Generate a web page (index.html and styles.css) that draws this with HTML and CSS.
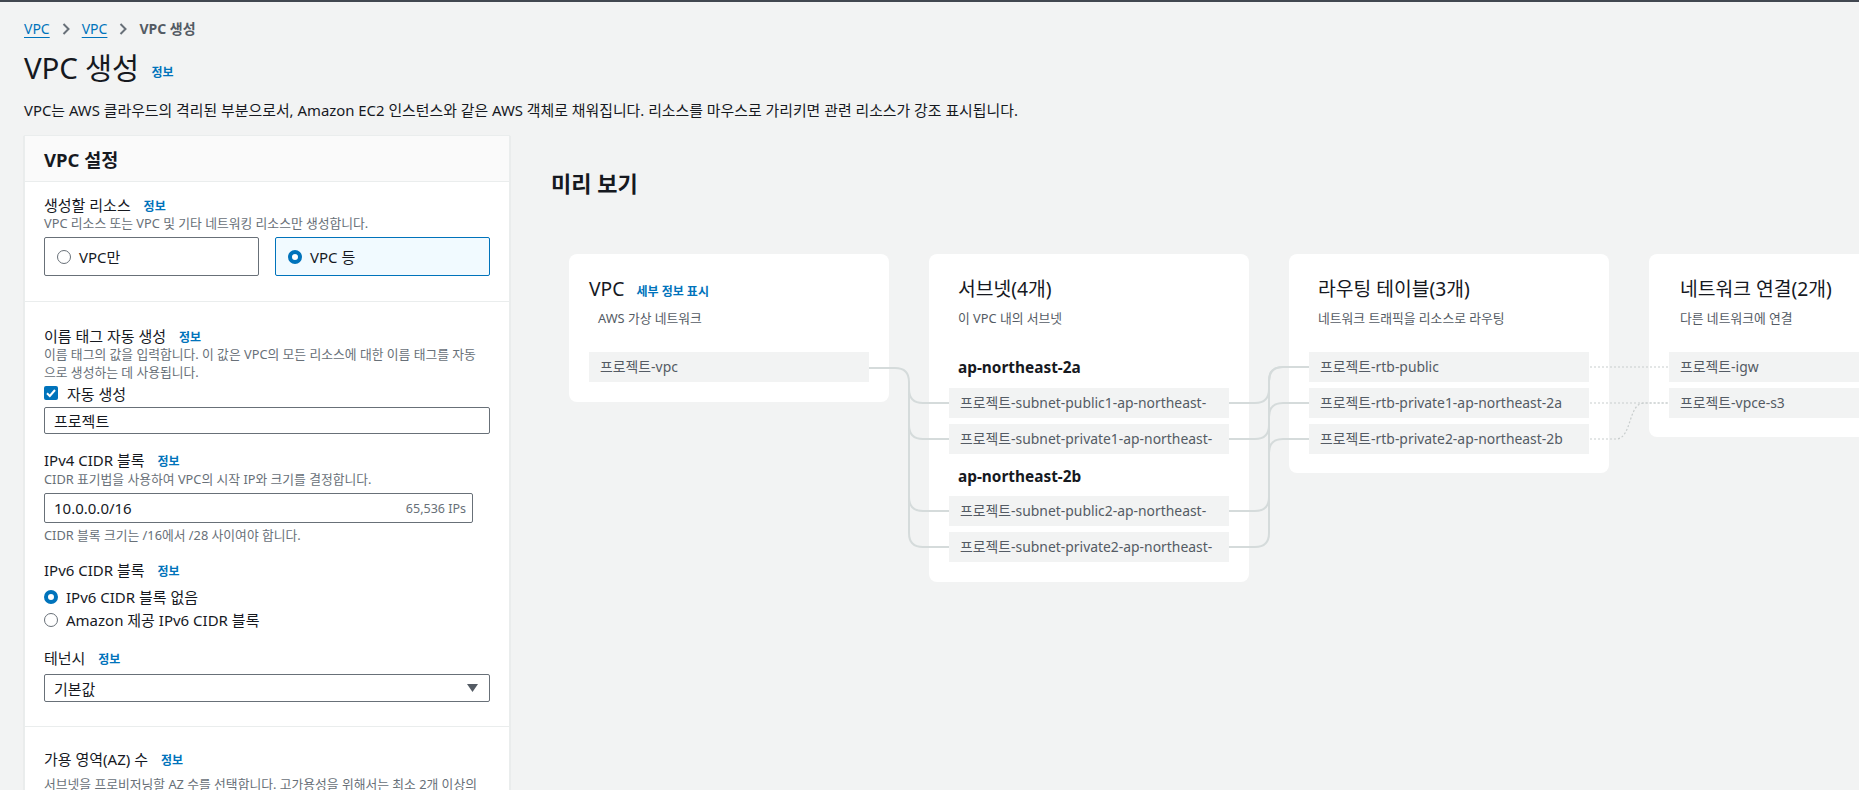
FILE: index.html
```html
<!DOCTYPE html>
<html lang="ko">
<head>
<meta charset="utf-8">
<title>VPC 생성</title>
<link rel="stylesheet" href="styles.css">
</head>
<body>
<div class="topbar"></div>
<div class="page">
  <nav class="crumbs">
    <a class="crumb-link">VPC</a>
    <svg class="chev" width="8" height="12" viewBox="0 0 8 12"><path d="M1.5 1 L6.5 6 L1.5 11" fill="none" stroke="#687078" stroke-width="2"/></svg>
    <a class="crumb-link">VPC</a>
    <svg class="chev" width="8" height="12" viewBox="0 0 8 12"><path d="M1.5 1 L6.5 6 L1.5 11" fill="none" stroke="#687078" stroke-width="2"/></svg>
    <span class="crumb-current">VPC 생성</span>
  </nav>
  <h1 class="title">VPC 생성 <span class="info">정보</span></h1>
  <p class="page-desc">VPC는 AWS 클라우드의 격리된 부분으로서, Amazon EC2 인스턴스와 같은 AWS 객체로 채워집니다. 리소스를 마우스로 가리키면 관련 리소스가 강조 표시됩니다.</p>

  <div class="layout">
    <aside class="panel">
      <div class="panel-head">VPC 설정</div>

      <div class="section s1">
        <div class="label">생성할 리소스 <span class="info">정보</span></div>
        <div class="hint">VPC 리소스 또는 VPC 및 기타 네트워킹 리소스만 생성합니다.</div>
        <div class="tiles">
          <div class="tile"><span class="radio"></span><span>VPC만</span></div>
          <div class="tile tile-on"><span class="radio radio-on"></span><span>VPC 등</span></div>
        </div>
      </div>

      <div class="section s2">
        <div class="label">이름 태그 자동 생성 <span class="info">정보</span></div>
        <div class="hint hint2">이름 태그의 값을 입력합니다. 이 값은 VPC의 모든 리소스에 대한 이름 태그를 자동<br>으로 생성하는 데 사용됩니다.</div>
        <div class="check-row">
          <span class="checkbox"><svg width="14" height="14" viewBox="0 0 14 14"><path d="M3 7.2 L5.8 10 L11 4" fill="none" stroke="#fff" stroke-width="2"/></svg></span>
          <span>자동 생성</span>
        </div>
        <div class="input input-name">프로젝트</div>

        <div class="label mt17">IPv4 CIDR 블록 <span class="info">정보</span></div>
        <div class="hint mt1">CIDR 표기법을 사용하여 VPC의 시작 IP와 크기를 결정합니다.</div>
        <div class="input input-cidr"><span>10.0.0.0/16</span><span class="ips">65,536 IPs</span></div>
        <div class="hint help">CIDR 블록 크기는 /16에서 /28 사이여야 합니다.</div>

        <div class="label mt17">IPv6 CIDR 블록 <span class="info">정보</span></div>
        <div class="radio-list">
          <div class="radio-row"><span class="radio radio-on"></span><span>IPv6 CIDR 블록 없음</span></div>
          <div class="radio-row"><span class="radio"></span><span>Amazon 제공 IPv6 CIDR 블록</span></div>
        </div>

        <div class="label mt18">테넌시 <span class="info">정보</span></div>
        <div class="input select"><span>기본값</span><svg width="11" height="8" viewBox="0 0 11 8"><path d="M0 0 H11 L5.5 8 Z" fill="#545b64"/></svg></div>
      </div>

      <div class="section s3">
        <div class="label">가용 영역(AZ) 수 <span class="info">정보</span></div>
        <div class="hint az-hint">서브넷을 프로비저닝할 AZ 수를 선택합니다. 고가용성을 위해서는 최소 2개 이상의</div>
      </div>
    </aside>

    <section class="preview">
      <h2 class="preview-title">미리 보기</h2>
      <div class="diagram">
        <div class="card card-vpc">
          <div class="card-title">VPC <span class="info">세부 정보 표시</span></div>
          <div class="card-sub vpc-sub">AWS 가상 네트워크</div>
          <div class="items list-items">
            <div class="item">프로젝트-vpc</div>
          </div>
        </div>

        <div class="card">
          <div class="card-title ind9">서브넷(4개)</div>
          <div class="card-sub ind9">이 VPC 내의 서브넷</div>
          <div class="az az1">ap-northeast-2a</div>
          <div class="items">
            <div class="item">프로젝트-subnet-public1-ap-northeast-</div>
            <div class="item">프로젝트-subnet-private1-ap-northeast-</div>
          </div>
          <div class="az az2">ap-northeast-2b</div>
          <div class="items">
            <div class="item">프로젝트-subnet-public2-ap-northeast-</div>
            <div class="item">프로젝트-subnet-private2-ap-northeast-</div>
          </div>
        </div>

        <div class="card card-short">
          <div class="card-title ind9">라우팅 테이블(3개)</div>
          <div class="card-sub ind9">네트워크 트래픽을 리소스로 라우팅</div>
          <div class="items list-items">
            <div class="item">프로젝트-rtb-public</div>
            <div class="item">프로젝트-rtb-private1-ap-northeast-2a</div>
            <div class="item">프로젝트-rtb-private2-ap-northeast-2b</div>
          </div>
        </div>

        <div class="card card-short">
          <div class="card-title ind10">네트워크 연결(2개)</div>
          <div class="card-sub ind10">다른 네트워크에 연결</div>
          <div class="items list-items">
            <div class="item">프로젝트-igw</div>
            <div class="item">프로젝트-vpce-s3</div>
          </div>
        </div>

        <svg class="links" width="1308" height="400" viewBox="551 254 1308 400">
          <g fill="none" stroke="#d5dbdb" stroke-width="2">
            <path d="M869 368 H895 Q909 368 909 382 V533 Q909 547 923 547 H949"/>
            <path d="M909 389 Q909 403 923 403 H949"/>
            <path d="M909 425 Q909 439 923 439 H949"/>
            <path d="M909 497 Q909 511 923 511 H949"/>
            <path d="M1229 403 H1255 Q1269 403 1269 389 V381 Q1269 367 1283 367 H1309"/>
            <path d="M1229 439 H1255 Q1269 439 1269 425 V417 Q1269 403 1283 403 H1309"/>
            <path d="M1229 511 H1255 Q1269 511 1269 497 V381 Q1269 367 1283 367"/>
            <path d="M1229 547 H1255 Q1269 547 1269 533 V453 Q1269 439 1283 439 H1309"/>
          </g>
          <g fill="none" stroke="#c8cdcd" stroke-width="1.2" stroke-dasharray="2 2">
            <path d="M1590 367 H1669"/>
            <path d="M1590 403 H1669"/>
            <path d="M1590 439 H1616 C1632 439 1628 403 1644 403 H1669"/>
          </g>
        </svg>
      </div>
    </section>
  </div>
</div>
</body>
</html>
```

FILE: styles.css
```css
* { box-sizing: border-box; }
html, body { margin: 0; padding: 0; }
body {
  background: #f2f3f3;
  color: #16191f;
  font-family: "Noto Sans", "Noto Sans CJK KR", sans-serif;
  font-size: 15px;
  width: 1859px;
  height: 790px;
  overflow: hidden;
}
.topbar { height: 2px; background: #414750; }
.page { padding-left: 24px; }

.crumbs {
  display: flex;
  align-items: center;
  gap: 12px;
  margin-top: 17px;
  height: 20px;
  line-height: 20px;
  font-size: 14px;
}
.crumb-link { color: #0073bb; text-decoration: underline; text-underline-offset: 3px; }
.crumb-current { color: #545b64; font-weight: 700; }
.chev { display: block; }

.title {
  margin: 11px 0 0;
  font-size: 29.5px;
  font-weight: 400;
  line-height: 36px;
  height: 36px;
  letter-spacing: -0.2px;
}
.info {
  color: #0073bb;
  font-size: 12px;
  font-weight: 700;
  margin-left: 6px;
  letter-spacing: 0;
}
.title .info { margin-left: 5px; vertical-align: 2px; }

.page-desc {
  margin: 14px 0 0;
  height: 20px;
  line-height: 20px;
  font-size: 14.9px;
  white-space: nowrap;
}

.layout {
  display: flex;
  align-items: flex-start;
  margin-top: 15px;
}

/* left panel */
.panel {
  width: 486px;
  flex-shrink: 0;
  background: #fff;
  border: 1px solid #eaeded;
  box-shadow: 0 1px 1px 0 rgba(0, 28, 36, 0.2);
  height: 700px;
}
.panel-head {
  height: 46px;
  padding: 0 19px;
  display: flex;
  align-items: center;
  background: #fafafa;
  border-bottom: 1px solid #eaeded;
  font-size: 18.5px;
  font-weight: 700;
}
.section {
  padding: 0 19px;
  border-bottom: 1px solid #eaeded;
}
.s1 { padding-top: 14px; padding-bottom: 25px; }
.s2 { padding-top: 25px; padding-bottom: 24px; }
.s3 { padding-top: 23px; border-bottom: none; }

.label { font-size: 15px; line-height: 18px; height: 18px; white-space: nowrap; }
.label .info { margin-left: 9px; }
.hint { font-size: 12.8px; line-height: 18px; height: 18px; color: #687078; }
.hint2 { height: 36px; }
.mt1 { margin-top: 1px; }
.mt18 { margin-top: 18px; }
.mt17 { margin-top: 17px; }

.tiles { display: flex; gap: 16px; margin-top: 5px; }
.tile {
  width: 215px;
  height: 39px;
  border: 1px solid #687078;
  border-radius: 2px;
  display: flex;
  align-items: center;
  gap: 8px;
  padding-left: 12px;
  font-size: 15px;
}
.tile-on { border-color: #0073bb; background: #f1faff; }

.radio {
  width: 14px;
  height: 14px;
  border-radius: 50%;
  border: 1px solid #687078;
  background: #fff;
  flex-shrink: 0;
}
.radio-on { border: 4px solid #0073bb; }

.check-row {
  display: flex;
  align-items: center;
  gap: 9px;
  margin-top: 2px;
  height: 20px;
  font-size: 15px;
}
.checkbox {
  width: 14px;
  height: 14px;
  border-radius: 2px;
  background: #0073bb;
  display: block;
}
.checkbox svg { display: block; }

.input {
  border: 1px solid #687078;
  border-radius: 2px;
  display: flex;
  align-items: center;
  padding: 0 9px;
  font-size: 15px;
  background: #fff;
}
.input-name { margin-top: 4px; height: 27px; }
.input-cidr {
  margin-top: 5px;
  height: 30px;
  width: 429px;
  justify-content: space-between;
  padding-right: 6px;
}
.ips { font-size: 12.5px; color: #687078; }
.help { margin-top: 3px; }

.radio-list { margin-top: 6px; }
.radio-row {
  display: flex;
  align-items: center;
  gap: 8px;
  height: 23px;
  font-size: 15px;
}

.select {
  margin-top: 7px;
  height: 28px;
  justify-content: space-between;
  padding-right: 11px;
}
.select svg { display: block; }

.az-hint { margin-top: 7px; white-space: nowrap; }

/* preview */
.preview {
  flex: 1;
  padding-left: 41px;
  padding-top: 36px;
}
.preview-title {
  margin: 0;
  font-size: 22px;
  font-weight: 700;
  line-height: 24px;
  height: 24px;
}
.diagram {
  position: relative;
  display: flex;
  align-items: flex-start;
  gap: 40px;
  margin-top: 59px;
  padding-left: 18px;
}
.card {
  width: 320px;
  background: #fff;
  border-radius: 8px;
  flex-shrink: 0;
  padding: 24px 20px 20px;
}
.card-short { padding-bottom: 19px; }

.card-title { font-size: 19.3px; line-height: 22px; height: 22px; white-space: nowrap; }
.card-title .info { margin-left: 7px; font-size: 12px; }
.card-sub { font-size: 12.8px; line-height: 16px; height: 16px; color: #545b64; margin-top: 10px; white-space: nowrap; }
.vpc-sub { padding-left: 9px; }
.ind9 { padding-left: 9px; }
.ind10 { padding-left: 11px; }

.items { display: flex; flex-direction: column; gap: 6px; }
.list-items { margin-top: 26px; }
.item {
  height: 30px;
  background: #f2f3f3;
  color: #545b64;
  font-size: 13.9px;
  line-height: 30px;
  padding-left: 11px;
  white-space: nowrap;
  overflow: hidden;
}
.az {
  font-size: 15.4px;
  font-weight: 700;
  line-height: 20px;
  height: 20px;
  padding-left: 9px;
}
.az1 { margin-top: 32px; margin-bottom: 10px; }
.az2 { margin-top: 13px; margin-bottom: 9px; }

.links {
  position: absolute;
  left: 0;
  top: 0;
  pointer-events: none;
}
```
